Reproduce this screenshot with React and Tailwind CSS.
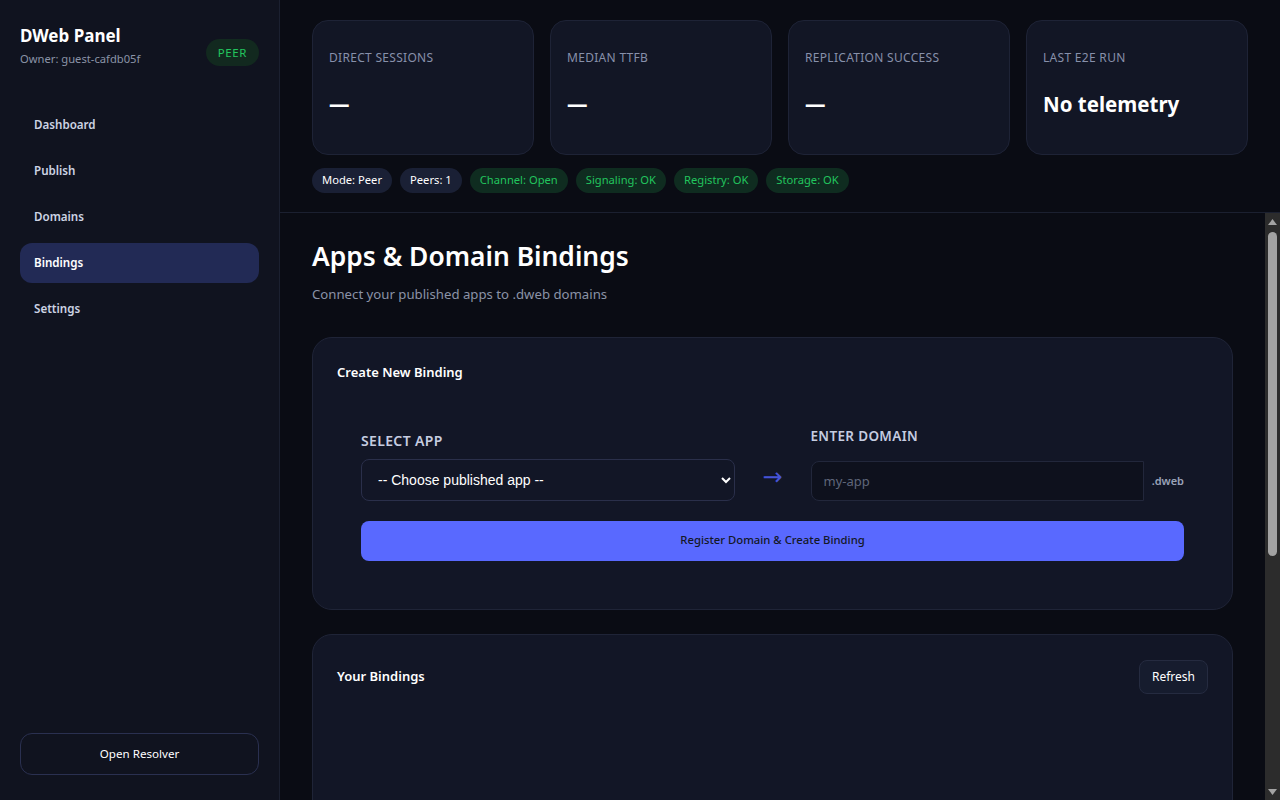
import { useState } from 'react'

const NAV = ['Dashboard', 'Publish', 'Domains', 'Bindings', 'Settings']

const STATS = [
  { label: 'Direct Sessions', value: '—' },
  { label: 'Median TTFB', value: '—' },
  { label: 'Replication Success', value: '—' },
  { label: 'Last E2E Run', value: 'No telemetry' },
]

const CHIPS = [
  { text: 'Mode: Peer', ok: false },
  { text: 'Peers: 1', ok: false },
  { text: 'Channel: Open', ok: true },
  { text: 'Signaling: OK', ok: true },
  { text: 'Registry: OK', ok: true },
  { text: 'Storage: OK', ok: true },
]

function Sidebar({ active, setActive }) {
  return (
    <aside className="w-[280px] shrink-0 h-full bg-[#10131f] border-r border-[#1b2030] flex flex-col px-5 pt-5 pb-[25px]">
      {/* Brand */}
      <div className="flex items-start justify-between">
        <div className="pt-[3px]">
          <h1 className="text-[17px] leading-[26px] font-bold text-white">DWeb Panel</h1>
          <p className="text-[11.2px] text-[#8b93a7] mt-[2px]">Owner: guest-cafdb05f</p>
        </div>
        <span className="mt-[19px] h-[27px] px-3 rounded-full bg-[#12291f] text-[#22c55e] text-[11.5px] tracking-wider flex items-center">
          PEER
        </span>
      </div>

      {/* Navigation */}
      <nav className="mt-[37px] flex flex-col gap-[6px]">
        {NAV.map((item) => (
          <button
            key={item}
            onClick={() => setActive(item)}
            className={`h-10 px-3.5 rounded-xl text-left text-[11.6px] font-semibold ${
              active === item ? 'bg-[#222a55] text-white' : 'text-[#cdd4e4]'
            }`}
          >
            {item}
          </button>
        ))}
      </nav>

      <div className="flex-1"></div>

      <button className="h-[42px] rounded-xl border border-[#2a3050] text-[11.6px] text-white">
        Open Resolver
      </button>
    </aside>
  )
}

function Header() {
  return (
    <header className="shrink-0 border-b border-[#1b2030] px-8 pt-5 pb-[19px]">
      <div className="grid grid-cols-4 gap-4">
        {STATS.map((s) => (
          <div
            key={s.label}
            className="h-[135px] rounded-2xl bg-[#121625] border border-[#1e2336] px-4 pt-[29px]"
          >
            <div className="text-xs uppercase tracking-wide text-[#8790aa]">{s.label}</div>
            <div className="mt-[23px] text-[20.5px] leading-[30px] font-bold text-white">{s.value}</div>
          </div>
        ))}
      </div>
      <div className="mt-[13px] flex gap-2">
        {CHIPS.map((c) => (
          <span
            key={c.text}
            className={`h-[25px] px-2.5 rounded-full text-[11.2px] flex items-center ${
              c.ok ? 'bg-[#0f2c20] text-[#22c55e]' : 'bg-[#1a2035] text-white'
            }`}
          >
            {c.text}
          </span>
        ))}
      </div>
    </header>
  )
}

function CreateBinding() {
  const [domain, setDomain] = useState('')
  return (
    <section className="rounded-[20px] bg-[#121626] border border-[#1f2437] p-6">
      <h3 className="text-[13px] font-semibold text-white leading-5">Create New Binding</h3>

      <div className="px-6 pt-11 pb-6">
        <div className="flex items-end">
          <div className="flex-1">
            <label className="block text-[14px] leading-5 font-semibold tracking-wide text-[#c5cce0] uppercase">
              Select App
            </label>
            <select className="mt-2 w-full h-[42px] rounded-lg bg-[#121626] border border-[#2a2f4a] px-3 text-sm text-white font-['Liberation_Sans',sans-serif]">
              <option>-- Choose published app --</option>
            </select>
          </div>
          <div className="w-[76px] h-[42px] flex items-center justify-center pb-1.5 text-[24px] text-[#4654d6] font-['DejaVu_Sans',sans-serif]">
            →
          </div>
          <div className="flex-1">
            <label className="block text-[13.5px] leading-5 font-semibold tracking-wide text-[#c5cce0] uppercase">
              Enter Domain
            </label>
            <div className="mt-[15px] flex items-center">
              <input
                value={domain}
                onChange={(e) => setDomain(e.target.value)}
                placeholder="my-app"
                className="flex-1 min-w-0 h-10 rounded-l-lg bg-[#0e111d] border border-[#22273b] px-3 text-[13px] text-white placeholder-[#5f667a] outline-none"
              />
              <span className="ml-2 text-[11px] font-semibold text-[#9aa3b8]">.dweb</span>
            </div>
          </div>
        </div>

        <button className="mt-5 w-full h-10 rounded-lg bg-[#5969ff] text-[11.3px] font-medium text-[#141826]">
          Register Domain &amp; Create Binding
        </button>
      </div>
    </section>
  )
}

function YourBindings() {
  return (
    <section className="mt-6 rounded-[20px] bg-[#121626] border border-[#1f2437] px-6 pt-[25px] pb-6 min-h-[540px]">
      <div className="flex items-center justify-between">
        <h3 className="text-[13px] font-semibold text-white">Your Bindings</h3>
        <button className="h-[34px] px-3 rounded-lg bg-[#161c2e] border border-[#252b40] text-[12px] text-white">
          Refresh
        </button>
      </div>
    </section>
  )
}

function ScrollBar() {
  return (
    <div className="w-[15px] shrink-0 bg-[#2c2c2c] flex flex-col items-center">
      <div className="h-[17px] flex items-center justify-center">
        <svg width="9" height="6" viewBox="0 0 9 6">
          <path d="M4.5 0 L9 6 L0 6 Z" fill="#a3a3a3" />
        </svg>
      </div>
      <div className="mt-[2px] w-[9px] h-[324px] rounded-full bg-[#a3a3a3]"></div>
      <div className="flex-1"></div>
      <div className="h-[17px] flex items-center justify-center">
        <svg width="9" height="6" viewBox="0 0 9 6">
          <path d="M0 0 L9 0 L4.5 6 Z" fill="#a3a3a3" />
        </svg>
      </div>
    </div>
  )
}

export default function App() {
  const [active, setActive] = useState('Bindings')

  return (
    <div className="h-screen w-full flex bg-[#0a0c14] [color-scheme:dark] font-['Noto_Sans','Open_Sans',sans-serif] overflow-hidden">
      <Sidebar active={active} setActive={setActive} />

      <div className="flex-1 flex flex-col min-w-0">
        <Header />

        <div className="flex-1 flex min-h-0">
          {/* Main Content */}
          <main className="flex-1 min-w-0 overflow-hidden px-8 pt-[25px] pb-10">
            <h2 className="text-[26.4px] leading-9 font-semibold text-white">Apps &amp; Domain Bindings</h2>
            <p className="mt-[11px] text-[13.2px] text-[#8b93a7]">Connect your published apps to .dweb domains</p>

            <div className="mt-8">
              <CreateBinding />
              <YourBindings />
            </div>
          </main>
          <ScrollBar />
        </div>
      </div>
    </div>
  )
}
